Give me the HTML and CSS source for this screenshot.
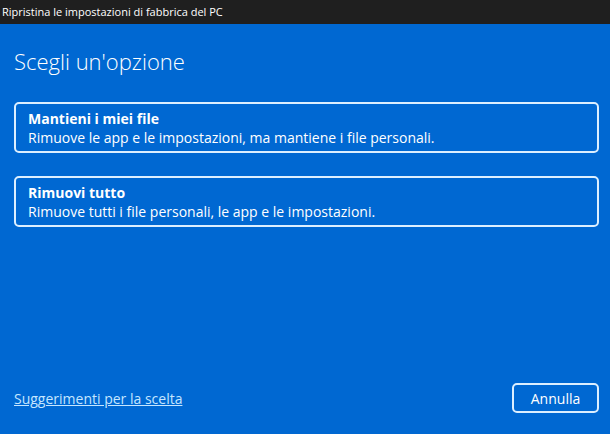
FILE: index.html
```html
<!DOCTYPE html>
<html lang="it">
<head>
  <meta charset="UTF-8" />
  <title>Ripristina le impostazioni di fabbrica del PC</title>
  <link rel="stylesheet" href="styles.css">
</head>
<body>

  <header class="titlebar">Ripristina le impostazioni di fabbrica del PC</header>

  <main class="panel">
    <h1>Scegli un'opzione</h1>

    <div class="options">
      <button class="option">
        <span class="option-title">Mantieni i miei file</span>
        <span class="option-desc">Rimuove le app e le impostazioni, ma mantiene i file personali.</span>
      </button>
      <button class="option">
        <span class="option-title">Rimuovi tutto</span>
        <span class="option-desc">Rimuove tutti i file personali, le app e le impostazioni.</span>
      </button>
    </div>

    <footer class="panel-footer">
      <a href="#" class="help-link">Suggerimenti per la scelta</a>
      <button class="cancel-btn">Annulla</button>
    </footer>
  </main>

</body>
</html>
```

FILE: styles.css
```css
body {
  margin: 0;
  width: 610px;
  height: 434px;
  display: flex;
  flex-direction: column;
  font-family: 'Open Sans', 'Noto Sans', sans-serif;
  background-color: #0068d2;
  color: #fff;
  overflow: hidden;
}

/* TITLE BAR */
.titlebar {
  height: 24px;
  line-height: 24px;
  padding-left: 2px;
  background: #1f1f1f;
  color: #fff;
  font-size: 11px;
}

/* MAIN PANEL */
.panel {
  flex: 1;
  display: flex;
  flex-direction: column;
  padding: 0 11px 0 14px;
}
h1 {
  margin: 22px 0 0 0;
  font-size: 22px;
  font-weight: 300;
  line-height: 30px;
}

.options {
  display: flex;
  flex-direction: column;
  gap: 23px;
  margin-top: 26px;
}
.option {
  display: flex;
  flex-direction: column;
  align-items: flex-start;
  height: 51px;
  padding: 6px 12px;
  background: transparent;
  border: 2px solid #dcefff;
  border-radius: 5px;
  color: #fff;
  font-family: inherit;
  text-align: left;
}
.option-title {
  font-size: 14px;
  font-weight: 700;
  line-height: 18px;
}
.option-desc {
  font-size: 14px;
  line-height: 20px;
}

/* FOOTER */
.panel-footer {
  margin-top: auto;
  margin-bottom: 21px;
  display: flex;
  justify-content: space-between;
  align-items: center;
}
.help-link {
  color: #c5e6ff;
  font-size: 14px;
  text-decoration: underline;
}
.cancel-btn {
  width: 87px;
  height: 30px;
  background: transparent;
  border: 2px solid #dcefff;
  border-radius: 5px;
  color: #fff;
  font-family: inherit;
  font-size: 14px;
}
```
